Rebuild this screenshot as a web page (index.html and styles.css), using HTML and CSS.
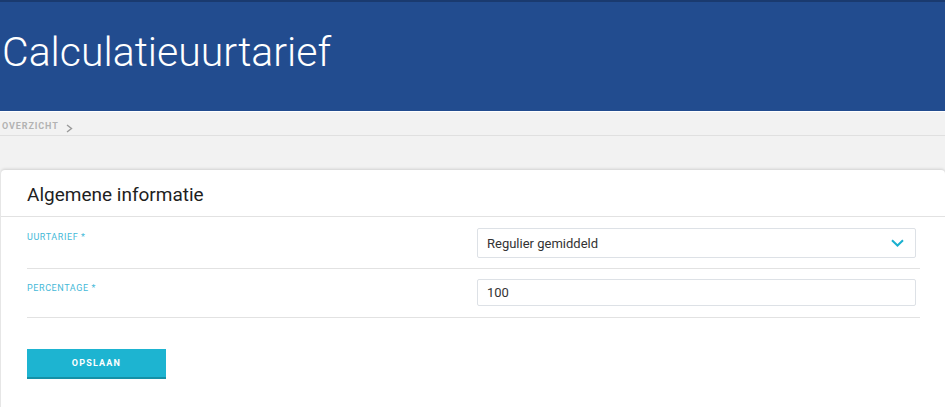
FILE: index.html
```html
<!doctype html>
<html>
<head>
    <meta charset="utf-8">
    <link rel="stylesheet" href="styles.css">
</head>
<body>

<div class="page-header">
    <h1 class="page-title">Calculatieuurtarief</h1>
</div>

<div class="breadcrumb">
    <span class="crumb">OVERZICHT</span>
    <svg class="crumb-arrow" width="7" height="9" viewBox="0 0 7 9"><path d="M1 1 L5.5 4.5 L1 8" fill="none" stroke="#9a9a9a" stroke-width="1.4"/></svg>
</div>

<div class="content">
    <div class="card">
        <div class="card-header">Algemene informatie</div>
        <form class="card-body">
            <div class="form-row">
                <label class="field-label">UURTARIEF *</label>
                <div class="field">
                    <div class="select">
                        <span>Regulier gemiddeld</span>
                        <svg width="13" height="8" viewBox="0 0 13 8"><path d="M1 1.2 L6.5 6.5 L12 1.2" fill="none" stroke="#1ab0cf" stroke-width="2"/></svg>
                    </div>
                </div>
            </div>
            <div class="form-row">
                <label class="field-label">PERCENTAGE *</label>
                <div class="field">
                    <input class="text-input" type="text" value="100">
                </div>
            </div>
            <div class="actions">
                <button type="button" class="btn-save">OPSLAAN</button>
            </div>
        </form>
    </div>
</div>

</body>
</html>
```

FILE: styles.css
```css
html,
body {
    width: 100%;
    height: 100%;
    padding: 0;
    margin: 0;
}

body {
    font-family: Roboto, "Liberation Sans", sans-serif;
    background: #f2f2f2;
    overflow: hidden;
}

.page-header {
    height: 109px;
    background: #224c8f;
    border-top: 2px solid #1a3a6f;
    border-bottom: 1px solid #ffffff;
}

.page-title {
    margin: 0;
    padding: 26px 0 0 2px;
    font-size: 41px;
    line-height: 48px;
    font-weight: 300;
    color: #ffffff;
}

.breadcrumb {
    display: flex;
    align-items: flex-start;
    height: 23px;
    padding-left: 2px;
    border-bottom: 1px solid #e0e0e0;
}

.crumb {
    margin-top: 9px;
    font-size: 9px;
    font-weight: 700;
    letter-spacing: 0.9px;
    color: #b3b3b3;
}

.crumb-arrow {
    margin: 12px 0 0 7px;
}

.content {
    padding-top: 34px;
}

.card {
    margin-left: 1px;
    background: #ffffff;
    border-radius: 4px 4px 0 0;
    box-shadow: 0 -1px 3px rgba(0, 0, 0, 0.14);
    height: 240px;
}

.card-header {
    height: 46px;
    padding-left: 26px;
    line-height: 50px;
    font-size: 19px;
    color: #1e1e1e;
    border-bottom: 1px solid #e2e2e2;
}

.card-body {
    padding: 0 25px 0 26px;
}

.form-row {
    display: flex;
    align-items: flex-start;
    padding: 11px 0 10px;
    border-bottom: 1px solid #e2e2e2;
}

.form-row + .form-row {
    padding: 10px 0 11px;
}

.field-label {
    width: 450px;
    padding-top: 4px;
    font-size: 9px;
    letter-spacing: 0.6px;
    color: #45b9d8;
}

.field {
    width: 439px;
}

.select {
    display: flex;
    align-items: center;
    justify-content: space-between;
    height: 28px;
    padding: 0 11px 0 9px;
    border: 1px solid #dde1e6;
    border-radius: 2px;
    font-size: 13px;
    color: #333333;
}

.text-input {
    display: block;
    box-sizing: border-box;
    width: 100%;
    height: 27px;
    padding: 0 9px;
    border: 1px solid #dde1e6;
    border-radius: 2px;
    font-family: Roboto, "Liberation Sans", sans-serif;
    font-size: 13px;
    color: #333333;
    outline: none;
}

.actions {
    padding-top: 31px;
}

.btn-save {
    display: block;
    width: 139px;
    height: 30px;
    padding: 0;
    border: none;
    border-bottom: 2px solid #1590a6;
    background: #1db4d1;
    color: #ffffff;
    font-family: Roboto, "Liberation Sans", sans-serif;
    font-size: 9px;
    font-weight: 700;
    letter-spacing: 1.2px;
}
```
